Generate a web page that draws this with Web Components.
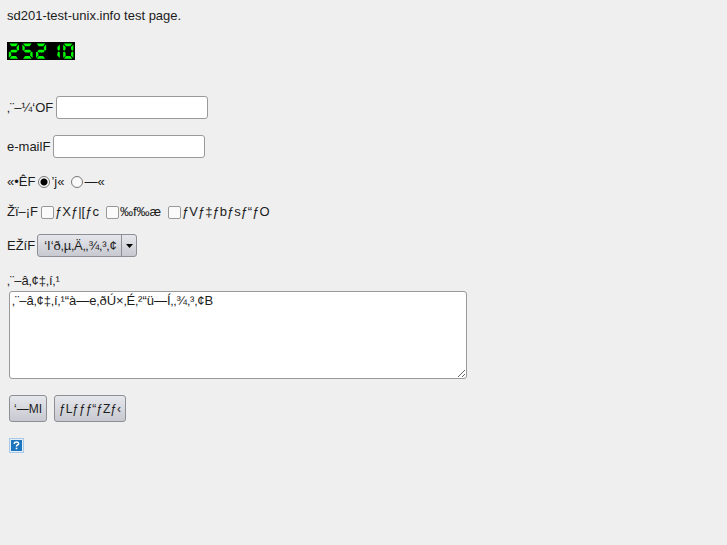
<!DOCTYPE html>
<html lang="ja">
<head>
<meta charset="utf-8">
<meta name="viewport" content="width=device-width, initial-scale=1">
<title>sd201-test-unix.info</title>
<style>
  body {
    margin: 8px 7px;
    background: #efefef;
    color: #1c1c1c;
    font: 13px/16px "Liberation Sans", Arial, sans-serif;
  }
</style>
</head>
<body>
<test-page>
  <hit-counter slot="counter" value="25210"></hit-counter>
  <text-field label="‚¨–¼‘OF" name="name"></text-field>
  <text-field label="e-mailF" name="email"></text-field>
  <choice-group label="«•ÊF" type="radio" name="sex" options="’j«,—«" checked="0"></choice-group>
  <choice-group label="Žï–¡F" type="checkbox" name="hobby" options="ƒXƒ|[ƒc,‰f‰æ,ƒVƒ‡ƒbƒsƒ“ƒO"></choice-group>
  <select-field label="EŽíF" name="job" option="‘I‘ð‚µ‚Ä‚‚¾‚³‚¢"></select-field>
  <message-field label="‚¨–â‚¢‡‚í‚¹" name="message">‚¨–â‚¢‡‚í‚¹“à—e‚ðÚ×‚É‚²“ü—Í‚‚¾‚³‚¢B</message-field>
  <push-button slot="actions">‘—MI</push-button>
  <push-button slot="actions" type="reset">ƒLƒƒƒ“ƒZƒ‹</push-button>
  <help-link slot="footer"></help-link>
</test-page>

<script>
class TestPage extends HTMLElement {
    constructor() {
        super();
        this.attachShadow({mode: 'open'});
        this.shadowRoot.innerHTML = `
            <style>
              :host { display: block; }
              p { margin: 0 0 18px; }
              .fields {
                  display: flex;
                  flex-direction: column;
                  margin-top: 36px;
              }
              .actions {
                  display: flex;
                  gap: 7px;
                  margin: 16px 2px;
              }
            </style>
            <p>sd201-test-unix.info test page.</p>
            <slot name="counter"></slot>
            <div class="fields"><slot></slot></div>
            <div class="actions"><slot name="actions"></slot></div>
            <slot name="footer"></slot>
        `;
    }
}

// Seven segments per digit
const SEGMENTS = {
    a: '2.5,1.5 11,1.5 9,4.2 4.5,4.2',
    b: '12,2.5 12,8 10.8,8.8 9.6,7.2 9.6,5',
    c: '10.8,9.4 12,10.2 12,16 9.6,13.4 9.6,11',
    d: '4.5,14 9,14 11,16.7 2.5,16.7',
    e: '1.8,10.2 3,9.4 4.2,11 4.2,13.4 1.8,16',
    f: '1.8,2.5 4.2,5 4.2,7.2 3,8.8 1.8,8',
    g: '3.2,9.1 4.7,7.8 9.1,7.8 10.6,9.1 9.1,10.4 4.7,10.4'
};
const DIGITS = ['abcdef', 'bc', 'abged', 'abgcd', 'fgbc', 'afgcd', 'afgedc', 'abc', 'abcdefg', 'abcdfg'];

class HitCounter extends HTMLElement {
    constructor() {
        super();
        this.attachShadow({mode: 'open'});
        const value = this.getAttribute('value') || '0';
        const digits = [...value].map((n, i) => `
            <g transform="translate(${i * 13.6} 0)">
              ${[...DIGITS[n]].map(s => `<polygon points="${SEGMENTS[s]}"/>`).join('')}
            </g>`).join('');

        this.shadowRoot.innerHTML = `
            <style>
              :host { display: block; }
              svg { display: block; background: #000; fill: #0f0; }
            </style>
            <svg width="${value.length * 14 - 2}" height="18" role="img" aria-label="${value}">${digits}</svg>
        `;
    }
}

class TextField extends HTMLElement {
    constructor() {
        super();
        this.attachShadow({mode: 'open'});
        this.shadowRoot.innerHTML = `
            <style>
              :host { display: flex; align-items: center; gap: 3px; margin-bottom: 16px; }
              input {
                  box-sizing: border-box;
                  width: 152px;
                  height: 23px;
                  margin: 0;
                  padding: 2px 4px;
                  border: 1px solid #999;
                  border-radius: 3px;
                  background: #fff;
                  font: inherit;
              }
            </style>
            <label for="field">${this.getAttribute('label')}</label>
            <input id="field" type="text" name="${this.getAttribute('name')}">
        `;
    }
}

class ChoiceGroup extends HTMLElement {
    constructor() {
        super();
        this.attachShadow({mode: 'open'});
        const type = this.getAttribute('type');
        const name = this.getAttribute('name');
        const checked = this.getAttribute('checked');
        const options = this.getAttribute('options').split(',').map((text, i) => `
            <span class="option">
              <input id="o${i}" type="${type}" name="${name}" ${checked === String(i) ? 'checked' : ''}>
              <label for="o${i}">${text}</label>
            </span>`).join('');

        this.shadowRoot.innerHTML = `
            <style>
              :host { display: block; margin-bottom: 14px; }
              fieldset { display: flex; gap: 3px; margin: 0; padding: 0; border: 0; min-width: 0; }
              .options { display: flex; gap: 7px; }
              .option { display: flex; align-items: center; gap: 1px; }
              input {
                  appearance: none;
                  box-sizing: border-box;
                  width: 13px;
                  height: 13px;
                  margin: 0;
                  border: 1px solid #999;
                  border-radius: 2px;
                  background: #fafafa;
              }
              input[type=radio] { width: 12px; height: 12px; border-color: #777; border-radius: 50%; }
              input[type=radio]:checked { background: radial-gradient(circle, #000 3px, #fafafa 4px); }
              input[type=checkbox]:checked { background: #333; }
            </style>
            <fieldset aria-labelledby="title">
              <span id="title">${this.getAttribute('label')}</span>
              <div class="options">${options}</div>
            </fieldset>
        `;
    }
}

class SelectField extends HTMLElement {
    constructor() {
        super();
        this.attachShadow({mode: 'open'});
        this.shadowRoot.innerHTML = `
            <style>
              :host { display: flex; align-items: center; gap: 2px; margin-bottom: 16px; }
              .box { position: relative; display: flex; }
              select {
                  appearance: none;
                  box-sizing: border-box;
                  height: 23px;
                  margin: 0;
                  padding: 0 19px 0 6px;
                  border: 1px solid #8e8f94;
                  border-radius: 3px;
                  background: linear-gradient(#e6e7ec, #c8c9d0);
                  color: inherit;
                  font: inherit;
              }
              svg { position: absolute; top: 0; right: 0; pointer-events: none; }
            </style>
            <label for="field">${this.getAttribute('label')}</label>
            <span class="box">
              <select id="field" name="${this.getAttribute('name')}">
                <option>${this.getAttribute('option')}</option>
              </select>
              <svg width="16" height="23" aria-hidden="true">
                <path d="M.5 1v21" stroke="#8e8f94"/>
                <path d="M5 10h7l-3.5 4z"/>
              </svg>
            </span>
        `;
    }
}

class MessageField extends HTMLElement {
    constructor() {
        super();
        this.attachShadow({mode: 'open'});
        this.shadowRoot.innerHTML = `
            <style>
              :host { display: block; }
              label { display: block; margin-bottom: 2px; }
              textarea {
                  display: block;
                  box-sizing: border-box;
                  width: 458px;
                  max-width: 100%;
                  height: 88px;
                  margin: 0 2px;
                  padding: 1px 2px;
                  border: 1px solid #999;
                  border-radius: 3px;
                  background: #fff;
                  color: inherit;
                  font: inherit;
              }
            </style>
            <label for="field">${this.getAttribute('label')}</label>
            <textarea id="field" name="${this.getAttribute('name')}">${this.textContent}</textarea>
        `;
    }
}

class PushButton extends HTMLElement {
    constructor() {
        super();
        this.attachShadow({mode: 'open'});
        this.shadowRoot.innerHTML = `
            <style>
              :host { display: block; }
              button {
                  display: block;
                  box-sizing: border-box;
                  height: 27px;
                  margin: 0;
                  padding: 0 4px;
                  border: 1px solid #8e8f94;
                  border-radius: 3px;
                  background: linear-gradient(#e6e7ec, #c8c9d0);
                  color: inherit;
                  font: inherit;
                  font-size: 12px;
              }
            </style>
            <button type="${this.getAttribute('type') || 'submit'}"><slot></slot></button>
        `;
    }
}

class HelpLink extends HTMLElement {
    constructor() {
        super();
        this.attachShadow({mode: 'open'});
        this.shadowRoot.innerHTML = `
            <style>
              :host { display: block; margin: 0 2px; }
              a { display: inline-block; }
              svg { display: block; }
            </style>
            <a href="#" aria-label="?">
              <svg width="15" height="15" viewBox="0 0 15 15">
                <path fill="#a9c9e8" d="M0 0h15v15H0z"/>
                <path fill="#e4eef8" d="M1 1h13v13H1z"/>
                <path fill="#1d75bd" d="M2 2h11v11H2z"/>
                <path fill="none" stroke="#fff" stroke-width="1.5" d="M5.3 6V5.2Q5.5 4 7.5 4T9.7 5.5Q9.7 6.5 8.5 7T7.5 8.7"/>
                <path fill="#fff" d="M6.7 9.7h1.6v1.5H6.7z"/>
              </svg>
            </a>
        `;
    }
}

customElements.define('test-page', TestPage);
customElements.define('hit-counter', HitCounter);
customElements.define('text-field', TextField);
customElements.define('choice-group', ChoiceGroup);
customElements.define('select-field', SelectField);
customElements.define('message-field', MessageField);
customElements.define('push-button', PushButton);
customElements.define('help-link', HelpLink);
</script>
</body>
</html>
